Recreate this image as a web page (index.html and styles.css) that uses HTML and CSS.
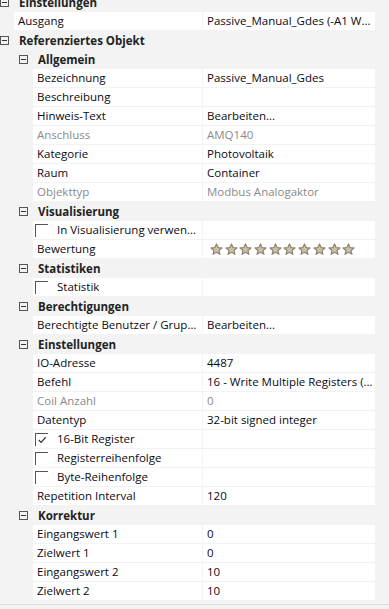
FILE: index.html
```html
<!DOCTYPE html>
<html lang="de">
<head>
    <meta charset="UTF-8">
    <title>Eigenschaften</title>
    <link rel="stylesheet" href="styles.css">
</head>
<body>
    <div class="grid">
        <div class="cat l1"><span class="toggle"></span>Einstellungen</div>
        <div class="prop l1"><div class="name">Ausgang</div><div class="value">Passive_Manual_Gdes (-A1 WR1)</div></div>

        <div class="cat l1"><span class="toggle"></span>Referenziertes Objekt</div>

        <div class="cat l2"><span class="toggle"></span>Allgemein</div>
        <div class="prop"><div class="name">Bezeichnung</div><div class="value">Passive_Manual_Gdes</div></div>
        <div class="prop"><div class="name">Beschreibung</div><div class="value"></div></div>
        <div class="prop"><div class="name">Hinweis-Text</div><div class="value">Bearbeiten...</div></div>
        <div class="prop disabled"><div class="name">Anschluss</div><div class="value">AMQ140</div></div>
        <div class="prop"><div class="name">Kategorie</div><div class="value">Photovoltaik</div></div>
        <div class="prop"><div class="name">Raum</div><div class="value">Container</div></div>
        <div class="prop disabled"><div class="name">Objekttyp</div><div class="value">Modbus Analogaktor</div></div>

        <div class="cat l2"><span class="toggle"></span>Visualisierung</div>
        <div class="prop"><div class="name check"><span class="box"></span><span class="label">In Visualisierung verwenden</span></div><div class="value"></div></div>
        <div class="prop"><div class="name">Bewertung</div><div class="value stars">
            <svg viewBox="0 0 14 14"><path d="M7 1l1.7 3.9 4.2.4-3.2 2.8 1 4.1L7 10 3.3 12.2l1-4.1L1.1 5.3l4.2-.4z"/></svg>
            <svg viewBox="0 0 14 14"><path d="M7 1l1.7 3.9 4.2.4-3.2 2.8 1 4.1L7 10 3.3 12.2l1-4.1L1.1 5.3l4.2-.4z"/></svg>
            <svg viewBox="0 0 14 14"><path d="M7 1l1.7 3.9 4.2.4-3.2 2.8 1 4.1L7 10 3.3 12.2l1-4.1L1.1 5.3l4.2-.4z"/></svg>
            <svg viewBox="0 0 14 14"><path d="M7 1l1.7 3.9 4.2.4-3.2 2.8 1 4.1L7 10 3.3 12.2l1-4.1L1.1 5.3l4.2-.4z"/></svg>
            <svg viewBox="0 0 14 14"><path d="M7 1l1.7 3.9 4.2.4-3.2 2.8 1 4.1L7 10 3.3 12.2l1-4.1L1.1 5.3l4.2-.4z"/></svg>
            <svg viewBox="0 0 14 14"><path d="M7 1l1.7 3.9 4.2.4-3.2 2.8 1 4.1L7 10 3.3 12.2l1-4.1L1.1 5.3l4.2-.4z"/></svg>
            <svg viewBox="0 0 14 14"><path d="M7 1l1.7 3.9 4.2.4-3.2 2.8 1 4.1L7 10 3.3 12.2l1-4.1L1.1 5.3l4.2-.4z"/></svg>
            <svg viewBox="0 0 14 14"><path d="M7 1l1.7 3.9 4.2.4-3.2 2.8 1 4.1L7 10 3.3 12.2l1-4.1L1.1 5.3l4.2-.4z"/></svg>
            <svg viewBox="0 0 14 14"><path d="M7 1l1.7 3.9 4.2.4-3.2 2.8 1 4.1L7 10 3.3 12.2l1-4.1L1.1 5.3l4.2-.4z"/></svg>
            <svg viewBox="0 0 14 14"><path d="M7 1l1.7 3.9 4.2.4-3.2 2.8 1 4.1L7 10 3.3 12.2l1-4.1L1.1 5.3l4.2-.4z"/></svg>
        </div></div>

        <div class="cat l2"><span class="toggle"></span>Statistiken</div>
        <div class="prop"><div class="name check"><span class="box"></span><span class="label">Statistik</span></div><div class="value"></div></div>

        <div class="cat l2"><span class="toggle"></span>Berechtigungen</div>
        <div class="prop"><div class="name">Berechtigte Benutzer / Gruppen</div><div class="value">Bearbeiten...</div></div>

        <div class="cat l2"><span class="toggle"></span>Einstellungen</div>
        <div class="prop"><div class="name">IO-Adresse</div><div class="value">4487</div></div>
        <div class="prop"><div class="name">Befehl</div><div class="value">16 - Write Multiple Registers (0x10)</div></div>
        <div class="prop disabled"><div class="name">Coil Anzahl</div><div class="value">0</div></div>
        <div class="prop"><div class="name">Datentyp</div><div class="value">32-bit signed integer</div></div>
        <div class="prop"><div class="name check"><span class="box"><svg viewBox="0 0 13 13"><path d="M3 6.5l2.5 2.5 5-5.5"/></svg></span><span class="label">16-Bit Register</span></div><div class="value"></div></div>
        <div class="prop"><div class="name check"><span class="box"></span><span class="label">Registerreihenfolge</span></div><div class="value"></div></div>
        <div class="prop"><div class="name check"><span class="box"></span><span class="label">Byte-Reihenfolge</span></div><div class="value"></div></div>
        <div class="prop"><div class="name">Repetition Interval</div><div class="value">120</div></div>

        <div class="cat l2"><span class="toggle"></span>Korrektur</div>
        <div class="prop"><div class="name">Eingangswert 1</div><div class="value">0</div></div>
        <div class="prop"><div class="name">Zielwert 1</div><div class="value">0</div></div>
        <div class="prop"><div class="name">Eingangswert 2</div><div class="value">10</div></div>
        <div class="prop"><div class="name">Zielwert 2</div><div class="value">10</div></div>
    </div>
    <div class="footer"></div>
</body>
</html>
```

FILE: styles.css
```css
body {
    background-color: #f3f3f3;
    font-family: 'Open Sans', 'Noto Sans', sans-serif;
    font-size: 11.5px;
    color: #0a0a14;
    margin: 0;
    height: 609px;
    overflow: hidden;
}
.grid {
    width: 375px;
    display: flex;
    flex-direction: column;
    gap: 1px;
    margin-top: -7px;
}
.cat {
    height: 18px;
    display: flex;
    align-items: center;
    font-weight: bold;
    color: #222;
}
.cat.l1 {
    padding-left: 0;
}
.cat.l2 {
    padding-left: 19px;
}
.toggle {
    position: relative;
    width: 9px;
    height: 9px;
    box-sizing: border-box;
    border: 1px solid #555;
    margin-right: 10px;
    flex-shrink: 0;
}
.toggle::after {
    content: '';
    position: absolute;
    left: 1px;
    right: 1px;
    top: 3px;
    height: 1px;
    background: #333;
}
.prop {
    height: 18px;
    display: flex;
    gap: 1px;
    padding-left: 33px;
}
.prop.l1 {
    padding-left: 14px;
}
.name, .value, .label {
    white-space: nowrap;
    overflow: hidden;
    text-overflow: ellipsis;
}
.name, .value {
    background-color: #fff;
    line-height: 18px;
    padding-left: 4px;
}
.name {
    flex: 1;
    min-width: 0;
}
.value {
    width: 172px;
    flex-shrink: 0;
    box-sizing: border-box;
}
.disabled .name, .disabled .value {
    color: #8a8a8a;
}
.check {
    display: flex;
    align-items: center;
    padding-left: 2px;
    padding-right: 6px;
}
.label {
    min-width: 0;
}
.box {
    width: 13px;
    height: 13px;
    box-sizing: border-box;
    border-top: 1px solid #555;
    border-left: 1px solid #555;
    margin-right: 9px;
    flex-shrink: 0;
    display: flex;
}
.box svg {
    width: 12px;
    height: 12px;
    fill: none;
    stroke: #333;
    stroke-width: 1.3;
}
.stars {
    display: flex;
    align-items: center;
    gap: 1.7px;
    padding-left: 7px;
}
.stars svg {
    width: 13px;
    height: 13px;
    flex-shrink: 0;
    fill: #c9c2ae;
    stroke: #8e8670;
    stroke-width: 1.3;
    stroke-linejoin: round;
}
.footer {
    margin-top: 4px;
    border-top: 1px solid #dcdcdc;
    height: 10px;
}
```
